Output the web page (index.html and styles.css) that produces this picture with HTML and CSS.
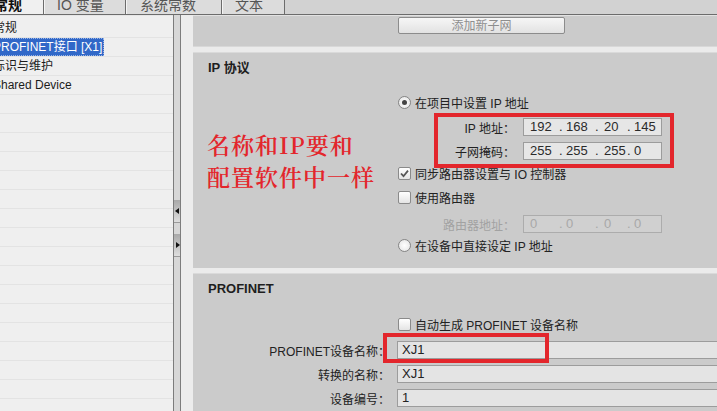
FILE: index.html
```html
<!DOCTYPE html>
<html lang="zh-CN">
<head>
    <meta charset="UTF-8">
    <title>PROFINET 接口属性</title>
    <link rel="stylesheet" href="styles.css">
</head>
<body>
    <div class="tabs">
        <div class="tab active"><span>常规</span></div>
        <div class="tab t-io"><span>IO 变量</span></div>
        <div class="tab t-sys"><span>系统常数</span></div>
        <div class="tab t-text"><span>文本</span></div>
    </div>

    <div class="workspace">
        <nav class="tree">
            <div class="row"><span class="label">常规</span></div>
            <div class="row"><span class="label selected">PROFINET接口 [X1]</span></div>
            <div class="row"><span class="label">标识与维护</span></div>
            <div class="row"><span class="label">Shared Device</span></div>
            <div class="row"></div><div class="row"></div><div class="row"></div>
            <div class="row"></div><div class="row"></div><div class="row"></div>
            <div class="row"></div><div class="row"></div><div class="row"></div>
            <div class="row"></div><div class="row"></div><div class="row"></div>
            <div class="row"></div><div class="row"></div><div class="row"></div>
            <div class="row"></div><div class="row"></div>
        </nav>

        <div class="splitter">
            <div class="grip"><i class="arrow left"></i></div>
            <div class="grip second"><i class="arrow right"></i></div>
        </div>
        <div class="gutter"></div>

        <main class="content">
            <div class="subnet-bar">
                <button class="btn" disabled>添加新子网</button>
            </div>
            <div class="divider"></div>

            <section class="group ip">
                <h2>IP 协议</h2>
                <div class="group-body">
                    <div class="note">名称和IP要和<br>配置软件中一样</div>
                    <div class="options">
                        <div class="opt r1"><span class="radio on"></span>在项目中设置 IP 地址</div>
                        <div class="field-row r2">
                            <span class="flabel">IP 地址：</span>
                            <span class="ipbox">
                                <span>192</span><span>.</span><span>168</span><span>.</span><span>20</span><span>.</span><span>145</span>
                            </span>
                        </div>
                        <div class="field-row r3">
                            <span class="flabel">子网掩码：</span>
                            <span class="ipbox">
                                <span>255</span><span>.</span><span>255</span><span>.</span><span>255</span><span>.</span><span>0</span>
                            </span>
                        </div>
                        <div class="opt r4"><span class="check on"><svg viewBox="0 0 13 13" width="13" height="13"><path d="M3 6.5 L5.5 9.2 L10 3.6" fill="none" stroke="#555" stroke-width="1.8"/></svg></span>同步路由器设置与 IO 控制器</div>
                        <div class="opt r5"><span class="check"></span>使用路由器</div>
                        <div class="field-row r6 disabled">
                            <span class="flabel">路由器地址：</span>
                            <span class="ipbox">
                                <span>0</span><span>.</span><span>0</span><span>.</span><span>0</span><span>.</span><span>0</span>
                            </span>
                        </div>
                        <div class="opt r7"><span class="radio"></span>在设备中直接设定 IP 地址</div>
                    </div>
                </div>
            </section>

            <div class="divider"></div>

            <section class="group pn">
                <h2>PROFINET</h2>
                <div class="opt auto"><span class="check"></span>自动生成 PROFINET 设备名称</div>
                <div class="name-row">
                    <span class="nlabel">PROFINET设备名称：</span>
                    <span class="text-field">XJ1</span>
                </div>
                <div class="name-row">
                    <span class="nlabel">转换的名称：</span>
                    <span class="text-field">XJ1</span>
                </div>
                <div class="name-row">
                    <span class="nlabel">设备编号：</span>
                    <span class="text-field">1</span>
                </div>
            </section>

            <!-- annotation frames drawn over the form -->
            <div class="mark mark-ip"></div>
            <div class="mark mark-name"></div>
        </main>
    </div>
</body>
</html>
```

FILE: styles.css
```css
/* General */
body {
    margin: 0;
    width: 717px;
    height: 411px;
    overflow: hidden;
    font-family: 'Liberation Sans', 'Noto Sans CJK SC', sans-serif;
    font-size: 12px;
    color: #222;
    background-color: #cbcbcb;
}

/* Tab strip */
.tabs {
    height: 15px;
    display: flex;
    background-color: #d2d2d2;
    border-bottom: 1px solid #6c6c6c;
    box-sizing: border-box;
    overflow: hidden;
}

.tab {
    height: 14px;
    box-sizing: border-box;
    background-color: #dcdcdc;
    border-right: 1px solid #6c6c6c;
    box-shadow: inset 1px 0 0 #f4f4f4;
    font-size: 14px;
    line-height: 14px;
    color: #555;
    overflow: hidden;
}

.tab span {
    display: block;
    margin-top: -2px;
    white-space: nowrap;
}

.tab.active {
    width: 44px;
    height: 15px;
    background-color: #f0f0f0;
    color: #111;
    font-weight: bold;
    margin-bottom: -1px;
}

.tab.active span { margin-left: -6px; }

.t-io { width: 82px; padding-left: 13px; }
.t-sys { width: 96px; padding-left: 14px; }
.t-text { width: 63px; padding-left: 13px; }

/* Main area */
.workspace {
    display: flex;
    height: 396px;
}

.tree {
    width: 173px;
    background-color: #efefef;
    padding-top: 3px;
    box-sizing: border-box;
    overflow: hidden;
    border-top: 1px solid #e6e6e6;
}

.tree .row {
    height: 19px;
    box-sizing: border-box;
    border-bottom: 1px solid #e3e3e3;
    white-space: nowrap;
    line-height: 18px;
}

.tree .label {
    display: inline-block;
    margin-left: -7px;
    padding-right: 2px;
    color: #1c1c1c;
}

.tree .label.selected {
    background-color: #3168c8;
    color: #fff;
    outline: 1px dotted #9bb6e6;
    outline-offset: -1px;
}

/* Splitter between tree and editor */
.splitter {
    width: 8px;
    box-sizing: border-box;
    border-left: 1px solid #7c7c7c;
    border-right: 1px solid #7c7c7c;
    background-color: #d7d7d7;
    padding-top: 185px;
}

.grip {
    height: 22px;
    background: linear-gradient(#a9a9a9, #dedede);
    border-bottom: 1px solid #9a9a9a;
    display: flex;
    align-items: center;
}

.grip.second { margin-top: 11px; }

.arrow {
    width: 0;
    height: 0;
    border-top: 3px solid transparent;
    border-bottom: 3px solid transparent;
}

.arrow.left { border-right: 4px solid #111; margin-left: 1px; }
.arrow.right { border-left: 4px solid #111; margin-left: 2px; }

.gutter {
    width: 12px;
    background-color: #ececec;
}

.content {
    flex: 1;
    position: relative;
    background-color: #cbcbcb;
    border-top: 1px solid #e2e2e2;
}

.subnet-bar {
    height: 31px;
    box-sizing: border-box;
    padding: 1px 0 0 205px;
    border-bottom: 1px solid #d8d8d8;
}

.btn {
    width: 167px;
    height: 17px;
    padding: 0;
    border: 1px solid #8c8c8c;
    border-radius: 2px;
    background: linear-gradient(#f6f6f6, #e2e2e2);
    font-family: inherit;
    font-size: 12px;
    line-height: 14px;
    color: #8e8e8e;
}

.divider {
    height: 6px;
    background-color: #ebebeb;
    border-bottom: 1px solid #dadada;
    box-sizing: border-box;
}

/* Groups */
.group h2 {
    margin: 0;
    padding: 6px 0 0 15px;
    height: 17px;
    font-size: 13px;
    line-height: 17px;
    font-weight: bold;
    color: #1e1e1e;
}

.ip { height: 215px; }

.group-body {
    display: flex;
}

.note {
    width: 205px;
    padding: 53px 0 0 14px;
    box-sizing: border-box;
    font-family: 'Noto Serif CJK SC', 'Noto Sans CJK SC', serif;
    font-size: 23px;
    font-weight: 600;
    line-height: 32px;
    letter-spacing: 1px;
    color: #e3262c;
    white-space: nowrap;
}

.options {
    padding-top: 17px;
}

.opt {
    display: flex;
    align-items: center;
    height: 18px;
    white-space: nowrap;
}

.opt .radio, .opt .check { margin-right: 4px; }

.radio {
    width: 13px;
    height: 13px;
    box-sizing: border-box;
    border: 1px solid #858585;
    border-radius: 50%;
    background: radial-gradient(#ffffff, #e2e2e2);
    display: flex;
    align-items: center;
    justify-content: center;
}

.radio.on::after {
    content: "";
    width: 5px;
    height: 5px;
    border-radius: 50%;
    background-color: #444;
}

.check {
    width: 13px;
    height: 13px;
    box-sizing: border-box;
    border: 1px solid #8a8a8a;
    border-radius: 2px;
    background: linear-gradient(#ffffff, #e4e4e4);
    position: relative;
}

.check svg {
    position: absolute;
    left: -1px;
    top: -1px;
}

.field-row {
    display: flex;
    align-items: center;
    height: 18px;
}

.flabel {
    width: 117px;
    margin-right: 8px;
    text-align: right;
    white-space: nowrap;
}

.ipbox {
    width: 139px;
    height: 18px;
    box-sizing: border-box;
    border: 1px solid #9c9c9c;
    background-color: #e6e6e6;
    display: grid;
    grid-template-columns: 29px 7px 29px 9px 23px 7px auto;
    padding-left: 6px;
    font-size: 13px;
    line-height: 16px;
    color: #2a2a2a;
}

.r1 { margin-top: 0; }
.r2 { margin-top: 7px; }
.r3 { margin-top: 6px; }
.r4 { margin-top: 4px; }
.r5 { margin-top: 6px; }
.r6 { margin-top: 9px; }
.r7 { margin-top: 3px; }

.disabled .flabel { color: #a2a2a2; }
.disabled .ipbox {
    background-color: #d0d0d0;
    border-color: #acacac;
    color: #a8a8a8;
}

/* PROFINET group */
.pn .auto {
    margin: 18px 0 0 205px;
}

.name-row {
    display: flex;
    align-items: center;
    height: 18px;
    margin-top: 6px;
}

.pn .auto + .name-row { margin-top: 8px; }

.nlabel {
    width: 197px;
    margin-right: 7px;
    text-align: right;
    white-space: nowrap;
}

.text-field {
    flex: 1;
    height: 18px;
    box-sizing: border-box;
    border: 1px solid #9c9c9c;
    border-right: none;
    background-color: #e4e4e4;
    padding-left: 4px;
    font-size: 13px;
    line-height: 16px;
}

/* Red annotation frames */
.mark {
    position: absolute;
    border: 4px solid #e3262c;
    box-sizing: border-box;
}

.mark-ip {
    left: 241px;
    top: 97px;
    width: 240px;
    height: 55px;
}

.mark-name {
    left: 190px;
    top: 317px;
    width: 166px;
    height: 30px;
}
```
